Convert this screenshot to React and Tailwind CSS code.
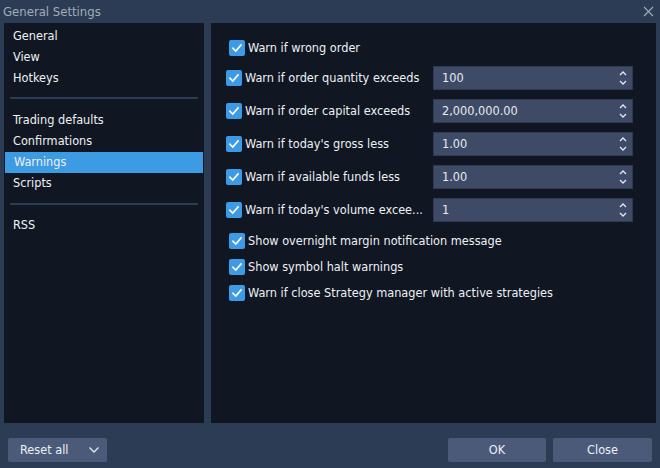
import React from "react";

const font = { fontFamily: '"DejaVu Sans Condensed", "DejaVu Sans", sans-serif', fontStretch: "condensed" };

function Check() {
  return (
    <span className="flex h-4 w-4 shrink-0 items-center justify-center rounded-[2px] bg-[#3d9be6]">
      <svg width="12" height="12" viewBox="0 0 12 12" fill="none">
        <path d="M2 6.2 L4.8 9 L10 3" stroke="#ffffff" strokeWidth="1.6" strokeLinecap="square" />
      </svg>
    </span>
  );
}

function Spinner() {
  return (
    <svg width="10" height="18" viewBox="0 0 10 18" fill="none">
      <path d="M2 6 L5 3 L8 6" stroke="#e6e9ef" strokeWidth="1.3" />
      <path d="M2 12 L5 15 L8 12" stroke="#e6e9ef" strokeWidth="1.3" />
    </svg>
  );
}

function InputRow({ label, value }) {
  return (
    <div className="flex h-6 items-center">
      <div className="flex w-[207px] items-center gap-[3px]">
        <Check />
        <span className="whitespace-nowrap">{label}</span>
      </div>
      <div className="flex h-6 w-[200px] items-center justify-between border border-[#2e3a52] bg-[#3f4a66] pl-[8px] pr-[4px]">
        <span className="text-[#e8ebf0]">{value}</span>
        <Spinner />
      </div>
    </div>
  );
}

function CheckRow({ label }) {
  return (
    <div className="flex h-4 items-center gap-[3px] pl-[3px]">
      <Check />
      <span className="whitespace-nowrap leading-4">{label}</span>
    </div>
  );
}

export default function App() {
  const nav1 = ["General", "View", "Hotkeys"];
  const nav2 = ["Trading defaults", "Confirmations", "Warnings", "Scripts"];
  return (
    <div className="flex h-[468px] w-[660px] flex-col bg-[#2b3c54] text-[12.6px] text-[#eef0f4]" style={font}>
      <div className="flex h-[23px] items-center justify-between pl-[3px] pr-[6px]">
        <span className="text-[13px] text-[#a3acb9]">General Settings</span>
        <svg width="11" height="11" viewBox="0 0 11 11">
          <path d="M1 1 L10 10 M10 1 L1 10" stroke="#a3acb9" strokeWidth="1.1" />
        </svg>
      </div>
      <div className="flex h-[400px] gap-[7px] pl-[4px] pr-[4px]">
        <div className="flex w-[200px] flex-col bg-[#111722] pt-[3px]">
          {nav1.map((n) => (
            <div key={n} className="flex h-[21px] items-center pl-[9px]">{n}</div>
          ))}
          <div className="mx-[6px] mb-[10px] mt-[8px] h-[2px] bg-[#2b3c54]" />
          <div className="flex flex-col pt-px">
            {nav2.map((n) => (
              <div
                key={n}
                className={
                  "flex h-[21px] items-center pl-[9px] " +
                  (n === "Warnings" ? "ml-[1px] mr-px bg-[#3d9be3] pl-[8px]" : "")
                }
              >
                {n}
              </div>
            ))}
          </div>
          <div className="mx-[6px] mb-[10px] mt-[9px] h-[2px] bg-[#2b3c54]" />
          <div className="flex h-[21px] items-center pl-[9px]">RSS</div>
        </div>
        <div className="flex flex-1 flex-col bg-[#111722] pl-[15px] pt-[17px]">
          <CheckRow label="Warn if wrong order" />
          <div className="mt-[10px] flex flex-col gap-[9px]">
            <InputRow label="Warn if order quantity exceeds" value="100" />
            <InputRow label="Warn if order capital exceeds" value="2,000,000.00" />
            <InputRow label="Warn if today's gross less" value="1.00" />
            <InputRow label="Warn if available funds less" value="1.00" />
            <InputRow label="Warn if today's volume excee..." value="1" />
          </div>
          <div className="mt-[11px] flex flex-col gap-[10px]">
            <CheckRow label="Show overnight margin notification message" />
            <CheckRow label="Show symbol halt warnings" />
            <CheckRow label="Warn if close Strategy manager with active strategies" />
          </div>
        </div>
      </div>
      <div className="flex flex-1 items-start justify-between pl-[8px] pr-[8px] pt-[15px]">
        <div className="flex h-6 w-[99px] items-center justify-between rounded-[2px] bg-[#4b5a78] pl-[12px] pr-[7px]">
          <span>Reset all</span>
          <svg width="12" height="8" viewBox="0 0 12 8" fill="none">
            <path d="M1.5 1.5 L6 6 L10.5 1.5" stroke="#e6e9ef" strokeWidth="1.3" />
          </svg>
        </div>
        <div className="flex gap-[7px]">
          <div className="flex h-6 w-[98px] items-center justify-center rounded-[2px] bg-[#4b5a78]">OK</div>
          <div className="flex h-6 w-[99px] items-center justify-center rounded-[2px] bg-[#4b5a78]">Close</div>
        </div>
      </div>
    </div>
  );
}
